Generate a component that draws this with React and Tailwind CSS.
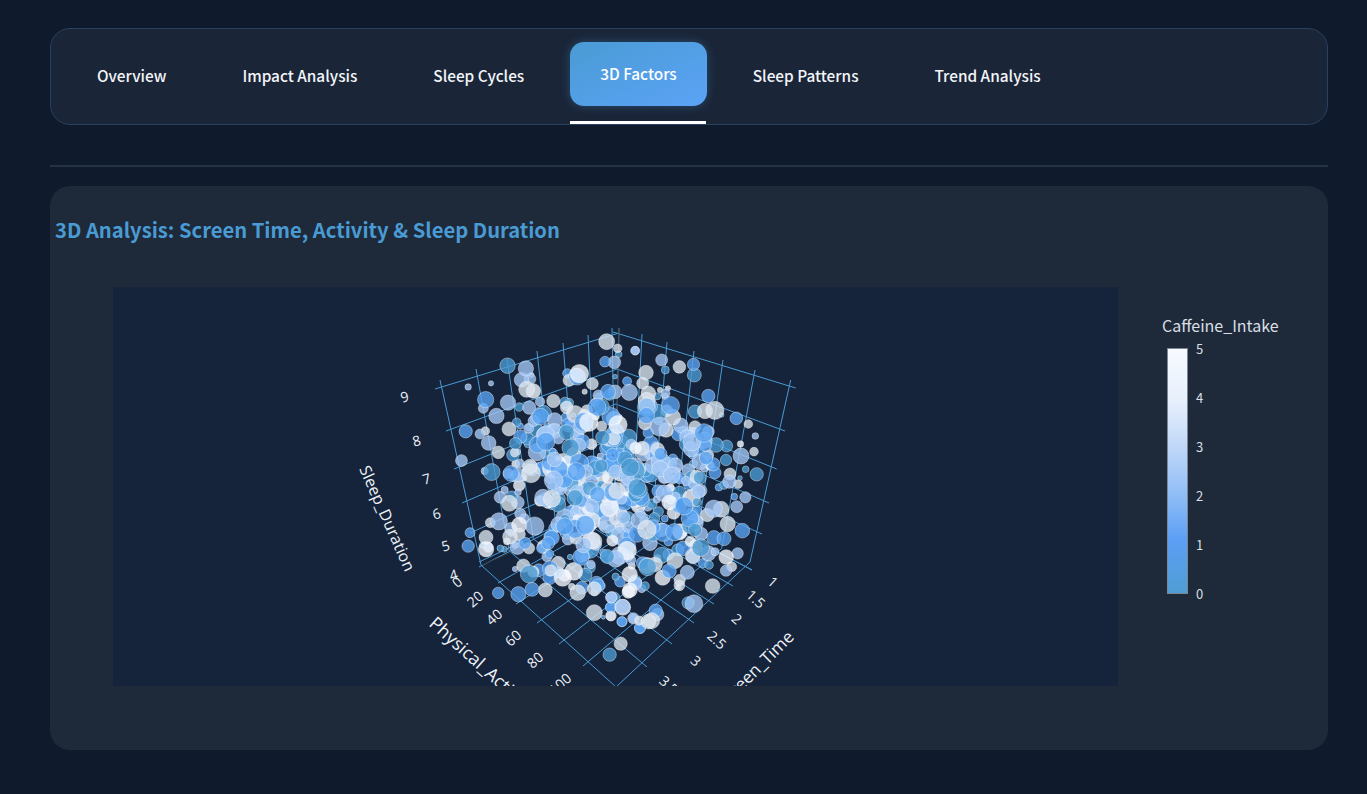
const tabs = ['Overview', 'Impact Analysis', 'Sleep Cycles', '3D Factors', 'Sleep Patterns', 'Trend Analysis'];

const colors = {
  t: '#4a9bd4',
  b: '#5aa4f4',
  l: '#a4c8f6',
  g: '#dde6ef',
  w: '#f5f9ff',
};

// marker spots read off the reference, in zoomed crop coords: [x, y, r, colour]
const spots = [
  [350, 320, [
    [770,65,24,'g'],[803,85,13,'g'],[806,103,10,'t'],[855,92,13,'l'],[765,125,16,'b'],[793,127,19,'l'],[795,170,7,'t'],
    [423,190,8,'l'],[544,165,8,'l'],[657,181,18,'g'],[727,191,18,'g'],[704,215,8,'g'],[530,208,24,'g'],[550,213,22,'w'],
    [400,265,15,'l'],[474,248,23,'l'],[745,226,16,'l'],[735,248,13,'l'],[347,334,20,'b'],[390,342,15,'l'],[406,333,13,'g'],
    [416,369,22,'l'],[477,327,21,'g'],[445,397,19,'g'],[489,405,19,'t'],[404,453,11,'l'],[495,469,17,'l'],[464,510,11,'l'],
    [485,530,17,'t'],[478,550,24,'g'],[510,430,13,'l'],[540,440,22,'g'],[610,243,20,'g'],[650,262,19,'g'],[570,245,14,'l'],
    [538,263,20,'l'],[558,295,18,'t'],[500,307,13,'t'],[655,315,21,'b'],[707,316,18,'b'],[740,291,8,'t'],[708,287,8,'l'],
    [670,285,7,'t'],[615,333,22,'l'],[536,325,15,'l'],[560,330,20,'t'],[511,350,20,'b'],
  ]],
  [350, 500, [
    [421,68,15,'g'],[408,112,21,'g'],[480,110,22,'g'],[508,103,18,'g'],[451,145,10,'t'],[463,148,9,'t'],[525,130,18,'b'],
    [537,145,17,'g'],[575,145,15,'b'],[598,162,13,'b'],[660,171,8,'t'],[495,207,8,'l'],[520,197,20,'g'],[550,215,17,'g'],
    [600,205,23,'b'],[625,190,21,'g'],[643,227,17,'g'],[546,268,21,'b'],[586,270,21,'g'],[665,260,10,'g'],[696,263,19,'b'],
    [733,266,21,'g'],[706,225,20,'t'],[733,338,24,'g'],[783,322,16,'b'],[818,320,22,'l'],[760,352,6,'b'],[782,348,14,'g'],
    [816,365,15,'b'],[784,292,17,'l'],[812,431,20,'g'],[779,464,20,'t'],[850,355,14,'l'],[870,383,17,'b'],[895,365,22,'g'],
    [835,276,19,'w'],[855,250,20,'l'],
  ]],
  [600, 320, [
    [106,92,13,'l'],[185,120,18,'l'],[196,150,12,'t'],[283,165,21,'t'],[138,158,22,'g'],[128,190,18,'g'],[145,220,22,'g'],
    [180,210,8,'g'],[204,205,8,'g'],[195,229,10,'l'],[325,228,20,'b'],[315,273,23,'g'],[285,275,20,'t'],[365,285,7,'t'],
    [409,295,19,'b'],[445,312,13,'g'],[466,348,10,'l'],[462,395,13,'g'],[423,408,24,'l'],[378,420,17,'t'],[348,375,22,'t'],
    [380,378,18,'t'],[437,448,10,'t'],[470,463,20,'t'],[420,474,7,'t'],[390,462,18,'g'],[388,485,20,'l'],[372,495,13,'t'],
    [403,530,10,'b'],[436,532,17,'l'],[200,272,18,'g'],[218,292,24,'g'],[198,330,22,'g'],[138,262,23,'b'],[135,310,20,'g'],
    [145,338,16,'b'],[165,375,11,'g'],[127,385,21,'g'],[170,405,22,'b'],[198,435,22,'w'],[232,450,8,'g'],[220,472,18,'b'],
    [258,483,14,'l'],[295,515,20,'l'],[250,335,17,'l'],[285,320,18,'g'],[325,335,18,'l'],[260,372,22,'t'],[295,390,18,'b'],
    [265,450,19,'l'],[340,433,20,'b'],[345,458,18,'b'],[290,470,20,'g'],[300,425,24,'l'],[325,405,16,'g'],
  ]],
  [600, 500, [
    [363,28,24,'g'],[410,20,18,'l'],[322,45,20,'g'],[290,33,15,'b'],[383,72,23,'g'],[427,92,22,'b'],[372,116,21,'b'],
    [413,160,17,'l'],[395,200,15,'g'],[378,212,17,'l'],[338,258,22,'g'],[262,217,21,'l'],[239,240,17,'g'],[235,262,8,'g'],
    [225,182,24,'g'],[278,168,22,'g'],[325,160,23,'l'],[327,195,13,'t'],[345,155,12,'l'],[188,233,23,'w'],[167,332,20,'b'],
    [155,362,24,'g'],[120,385,16,'b'],[100,355,17,'l'],[118,362,14,'g'],[66,365,15,'b'],[33,347,16,'g'],[68,322,24,'g'],
    [33,322,17,'b'],[34,292,17,'l'],[90,270,22,'w'],[135,258,13,'t'],[105,245,20,'t'],[60,245,16,'b'],[47,230,11,'t'],
    [303,102,20,'l'],[250,145,22,'b'],[205,125,13,'b'],[285,68,25,'l'],[240,100,20,'g'],[185,90,20,'g'],[150,130,22,'l'],
  ]],
];

function rng(seed) {
  let a = seed;
  return () => {
    a |= 0;
    a = (a + 0x6d2b79f5) | 0;
    let t = Math.imul(a ^ (a >>> 15), 1 | a);
    t = (t + Math.imul(t ^ (t >>> 7), 61 | t)) ^ t;
    return ((t ^ (t >>> 14)) >>> 0) / 4294967296;
  };
}

function buildMarkers() {
  const rand = rng(42);
  const gauss = () => (rand() + rand() + rand() - 1.5) / 0.5;
  const core = [];
  // dense middle of the cloud
  while (core.length < 430) {
    const x = 602 + gauss() * 56;
    const y = 488 + gauss() * 50;
    const p = rand();
    const c = p < 0.2 ? 't' : p < 0.48 ? 'b' : p < 0.74 ? 'l' : p < 0.9 ? 'g' : 'w';
    core.push({ x, y, r: 3 + rand() * 6.5, c });
  }
  // white hot centre
  for (let i = 0; i < 40; i++) {
    core.push({ x: 598 + gauss() * 24, y: 492 + gauss() * 14, r: 4 + rand() * 4, c: rand() < 0.7 ? 'w' : 'l' });
  }
  const placed = spots.flatMap(([ox, oy, list]) =>
    list.map(([x, y, r, c]) => ({ x: ox + x / 3, y: oy + y / 3, r: r / 3, c }))
  );
  return [...placed, ...core].sort((a, b) => a.r - b.r + (rand() - 0.5) * 8);
}

const markers = buildMarkers();

const lerp = (a, b, f) => [a[0] + (b[0] - a[0]) * f, a[1] + (b[1] - a[1]) * f];

const back = [615, 498];
const leftCorner = [481, 565];
const rightCorner = [750, 562];

const leftTops = [[440, 380], [476, 369], [507, 359], [537, 351], [563, 343], [588, 335], [612, 328]];
const leftF = [0, 0.21, 0.39, 0.56, 0.715, 0.86, 1];
const frontRight = [[616, 687], [647, 667], [672, 644], [694, 623], [714, 604], [733, 586], [752, 570]];

const rightTops = [[619, 328], [642, 334], [667, 342], [694, 351], [723, 360], [755, 370], [790.7, 380]];
const rightF = [0, 0.134, 0.28, 0.44, 0.61, 0.79, 1];
const frontLeft = [[479, 562], [498, 583], [516, 604], [537, 623], [559, 644], [583, 666], [616, 687]];

const gridLines = [
  ...leftTops.map((top, i) => [top, lerp(leftCorner, back, leftF[i])]),
  ...leftTops.map((_, i) => [lerp(leftCorner, back, leftF[i]), frontRight[i]]),
  ...rightTops.map((top, i) => [top, lerp(back, rightCorner, rightF[i])]),
  ...rightTops.map((_, i) => [lerp(back, rightCorner, rightF[i]), frontLeft[i]]),
  // sleep duration levels, left wall then right wall
  [[435, 389], [619, 333]], [[446, 431], [617, 369]], [[454, 469], [616, 404]], [[462, 503], [616, 437]], [[470, 533], [615, 468]],
  [[795.7, 388], [613, 332]], [[785, 431], [617, 369]], [[776.7, 469], [616, 404]], [[769, 503], [616, 437]], [[762, 534], [615, 468]], [[752, 570], [615, 498]],
  [[479, 567], [615, 498]],
];

const sleepTicks = [['9', 405, 398], ['8', 417, 442], ['7', 427, 480], ['6', 437, 515], ['5', 446, 547], ['4', 454, 576]];
const activityTicks = [['0', 458, 583], ['20', 476, 600], ['40', 495, 618], ['60', 514, 639], ['80', 536, 661], ['100', 561, 685]];
const screenTicks = [['1', 772, 583], ['1.5', 755, 600], ['2', 736, 620], ['2.5', 716, 641], ['3', 695, 662], ['3.5', 668, 686]];

function ScatterChart() {
  return (
    <svg width="1005" height="399" className="block bg-[#15243b]">
      <g transform="translate(-113 -287)" fontFamily="'Open Sans', sans-serif" fill="#eef2f7">
        {gridLines.map(([a, b], i) => (
          <line key={i} x1={a[0]} y1={a[1]} x2={b[0]} y2={b[1]} stroke="#4a9bd4" strokeWidth="1" />
        ))}
        <line x1="619" y1="328" x2="617" y2="420" stroke="#444" />
        <line x1="482" y1="565" x2="510" y2="553" stroke="#333" />
        {markers.map((m, i) => (
          <circle key={i} cx={m.x} cy={m.y} r={m.r} fill={colors[m.c]} fillOpacity="0.78" stroke="#fff" strokeOpacity="0.55" strokeWidth="0.7" />
        ))}
        {sleepTicks.map(([t, x, y]) => (
          <text key={t} x={x} y={y} fontSize="14" textAnchor="middle" dominantBaseline="middle" transform={`rotate(-15 ${x} ${y})`}>{t}</text>
        ))}
        {activityTicks.map(([t, x, y]) => (
          <text key={t} x={x} y={y} fontSize="14" textAnchor="middle" dominantBaseline="middle" transform={`rotate(-42 ${x} ${y})`}>{t}</text>
        ))}
        {screenTicks.map(([t, x, y]) => (
          <text key={t} x={x} y={y} fontSize="14" textAnchor="middle" dominantBaseline="middle" transform={`rotate(42 ${x} ${y})`}>{t}</text>
        ))}
        <text x="386" y="519" fontSize="16" textAnchor="middle" dominantBaseline="middle" transform="rotate(66 386 519)">Sleep_Duration</text>
        <text x="428" y="625" fontSize="18" transform="rotate(42 428 625)">Physical_Activity</text>
        <text x="795" y="638" fontSize="17" textAnchor="end" transform="rotate(-45 795 638)">Screen_Time</text>
      </g>
    </svg>
  );
}

function ColorLegend() {
  return (
    <div className="ml-[44px] pt-[29px] font-['Noto_Sans_CJK_SC',sans-serif] text-[#d9dfe6]">
      <div className="text-base leading-[18px] whitespace-nowrap">Caffeine_Intake</div>
      <div className="flex ml-[5px] mt-[14px]">
        <div className="w-[21px] h-[246px] border border-[#7b8794] bg-[linear-gradient(to_top,#4f9dd4,#5c9ff5_22%,#8fbdf6_40%,#bcd5f8_58%,#e6effc_78%,#f7faff)]"></div>
        <div className="ml-2 h-[246px] flex flex-col-reverse justify-between text-[13px] leading-none">
          {[0, 1, 2, 3, 4, 5].map((n) => (
            <span key={n} className="h-0 flex items-center">{n}</span>
          ))}
        </div>
      </div>
    </div>
  );
}

export default function App() {
  return (
    <div className="min-h-screen bg-[#0f1a2c] pl-[50px] pr-[39px] pt-7 pb-11 font-['Noto_Sans_CJK_SC',sans-serif]">
      <nav className="flex gap-4 pl-4 pt-[15px] pb-4 rounded-[20px] border border-[#27415f] bg-[#1a2538]">
        {tabs.map((tab) => {
          const active = tab === '3D Factors';
          return (
            <button
              key={tab}
              className={
                active
                  ? 'relative h-16 px-[30px] -translate-y-0.5 rounded-[14px] bg-gradient-to-br from-[#4a9bd4] to-[#5ba3f7] shadow-[0_0_10px_rgba(74,155,212,0.35)] text-white text-[15.36px] font-medium'
                  : 'h-16 px-[30px] text-[#f3f5f8] text-[15.36px] font-medium'
              }
            >
              {tab}
              {active && <span className="absolute left-0 -bottom-[18px] w-[136px] h-[3px] bg-white"></span>}
            </button>
          );
        })}
      </nav>

      <div className="mt-10 h-0.5 bg-[#243246]"></div>

      <section className="mt-[19px] h-[564px] rounded-[20px] bg-[#1e2a3a] pt-7 pl-[5px]">
        <h2 className="text-[20.2px] leading-8 font-bold text-[#4a9bd4]">3D Analysis: Screen Time, Activity &amp; Sleep Duration</h2>
        <div className="flex mt-[41px] ml-[58px]">
          <ScatterChart />
          <ColorLegend />
        </div>
      </section>
    </div>
  );
}
